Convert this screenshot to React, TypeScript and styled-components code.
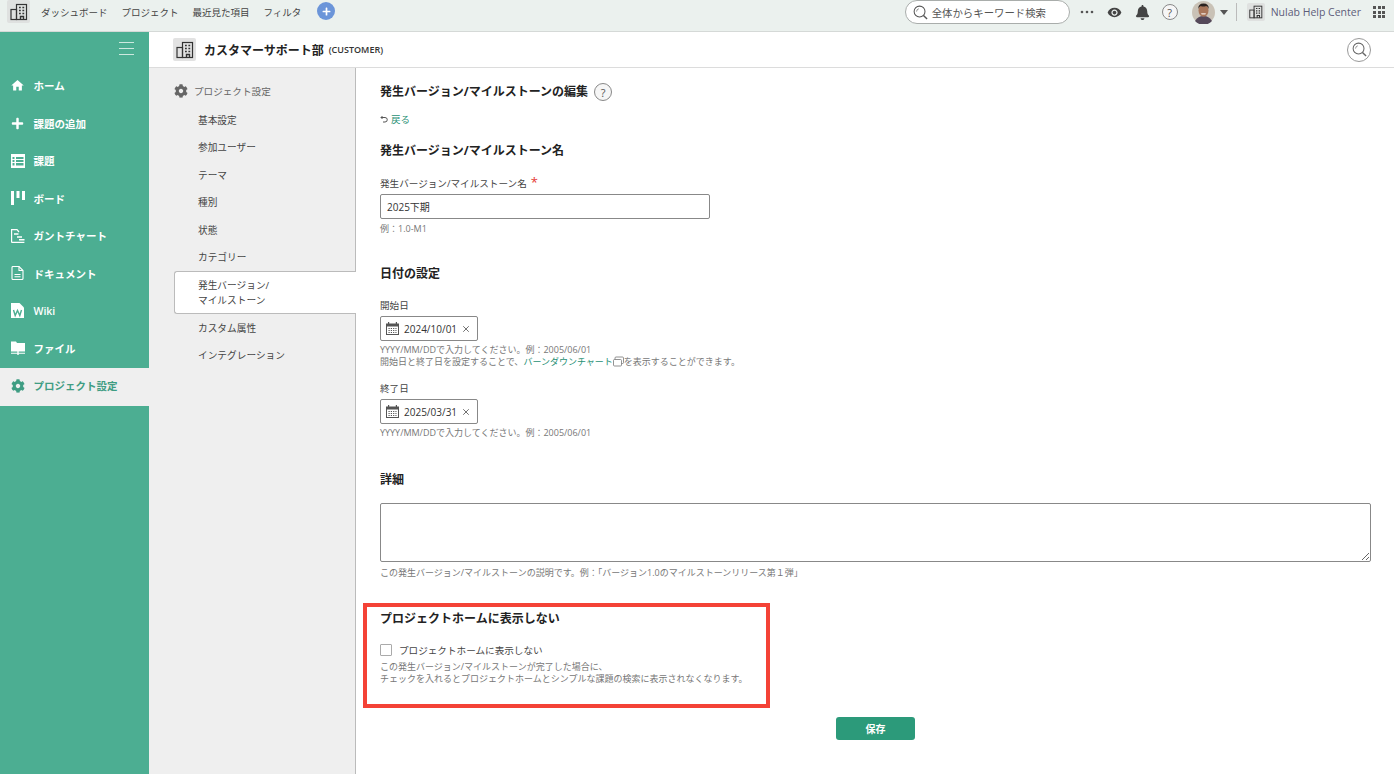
import React from 'react';
import styled, { createGlobalStyle } from 'styled-components';
import { FaPlus, FaCog, FaBell } from 'react-icons/fa';
import { MdHome, MdRemoveRedEye } from 'react-icons/md';
import { FiX } from 'react-icons/fi';

const GlobalStyle = createGlobalStyle`
	html, body {
		margin: 0;
		padding: 0;
		height: 100%;
		background: #fff;
		font-family: 'Open Sans', 'Noto Sans CJK JP', sans-serif;
		color: #333;
	}
	* {
		box-sizing: border-box;
	}
`;

const BuildingIcon = ({ size = 18 }: { size?: number }) => (
	<svg width={size} height={size} viewBox="0 0 18 18" fill="none" stroke="#333" strokeWidth="1.2">
		<rect x="1" y="6.5" width="5.5" height="10" />
		<rect x="6.5" y="1.5" width="10" height="15" />
		<path d="M9 4.5h1.8M12.4 4.5h1.8M9 7.5h1.8M12.4 7.5h1.8M9 10.5h1.8M12.4 10.5h1.8M10.5 16.5v-3h3v3" strokeWidth="1.4" />
	</svg>
);

const LensIcon = ({ size, color }: { size: number; color: string }) => (
	<svg width={size} height={size} viewBox="0 0 16 16" fill="none" stroke={color} strokeWidth="1.100">
		<circle cx="7" cy="7" r="5.800" />
		<path d="M11.200 11.200L15 15" strokeWidth="1.500" />
		<path d="M3.800 7a3.200 3.200 0 012.400-3" strokeWidth=".7" />
	</svg>
);

const DotsIcon = () => (
	<svg width="14" height="4" viewBox="0 0 14 4" fill="#555">
		<circle cx="2" cy="2" r="1.300" />
		<circle cx="7" cy="2" r="1.300" />
		<circle cx="12" cy="2" r="1.300" />
	</svg>
);

const ListIcon = () => (
	<svg width="14" height="14" viewBox="0 0 14 14">
		<path fill="#fff" fillRule="evenodd" d="M0 0h14v14H0zM1.500 3v2h2V3zM5 3v2h7.500V3zM1.500 6v2h2V6zM5 6v2h7.500V6zM1.500 9v2.500h2V9zM5 9v2.500h7.500V9z" />
	</svg>
);

const BoardIcon = () => (
	<svg width="14" height="14" viewBox="0 0 14 14" fill="#fff">
		<rect x="0" y="0" width="3" height="14" />
		<rect x="5.500" y="0" width="3" height="7" />
		<rect x="11" y="0" width="3" height="9" />
	</svg>
);

const GanttIcon = () => (
	<svg width="14" height="14" viewBox="0 0 14 14" fill="none" stroke="#fff" strokeWidth="1.200">
		<path d="M.6 13.400V.6h5.400l2 2.400M.6 13.400H13.400" />
		<path d="M3 5h4.500M6 8h5M8 10.800h5.500" strokeWidth="1.500" />
	</svg>
);

const DocIcon = () => (
	<svg width="13" height="14" viewBox="0 0 13 14" fill="none" stroke="#fff" strokeWidth="1.100">
		<path d="M1 1.500q0-1 1-1h6l4 4v8q0 1-1 1H2q-1 0-1-1z" />
		<path d="M8 .5v4h4M3.500 8.500h6M3.500 10.800h6" />
	</svg>
);

const WikiIcon = () => (
	<svg width="13" height="15" viewBox="0 0 13 15">
		<path fill="#fff" d="M0 0h8.500l4.500 4.500V15H0z" />
		<path fill="none" stroke="#4cae92" strokeWidth="1.400" d="M2.500 7l1.700 5.500 2.300-5 2.300 5L10.500 7" />
	</svg>
);

const FileIcon = () => (
	<svg width="14" height="14" viewBox="0 0 14 14">
		<path fill="#fff" d="M0 .5h5l1 1.500h8v8.500H0zM6.300 10.500h1.400v1.300H14v.9H7.700V14H6.300v-1.300H0v-.9h6.300z" />
	</svg>
);

const CalendarIcon = () => (
	<svg width="13" height="13" viewBox="0 0 13 13">
		<path fill="#555" fillRule="evenodd" d="M0 1.500h2V0h1.200v1.500h6.600V0H11v1.500h2V13H0zM1 4.500V12h11V4.500z" />
		<path stroke="#555" strokeWidth="1.100" strokeDasharray="1.200 1.100" d="M2.500 6.500h8M2.500 8.500h8M2.500 10.500h8" />
	</svg>
);

const BackIcon = () => (
	<svg width="8" height="8" viewBox="0 0 8 8" fill="none" stroke="#555" strokeWidth="1">
		<path d="M1 2.500h4a2 2 0 010 4.500H3M2.500 1L1 2.500 2.500 4" />
	</svg>
);

const ExternalIcon = () => (
	<ExternalSvg width="11" height="11" viewBox="0 0 11 11" fill="none" stroke="#777" strokeWidth=".8">
		<rect x="2" y="1" width="8.500" height="6.500" rx="1" />
		<rect x=".5" y="3.500" width="8" height="6.500" rx="1" fill="#fff" />
	</ExternalSvg>
);

const Avatar = () => (
	<svg width="23" height="23" viewBox="0 0 23 23">
		<circle cx="11.500" cy="11.500" r="11.500" fill="#c9c2b6" />
		<path fill="#55495a" d="M3 20q3-5 8.500-5t8.500 5a11.500 11.500 0 01-17 0z" />
		<ellipse cx="11.500" cy="9.500" rx="5" ry="6.200" fill="#a8765a" />
		<path fill="#2b2320" d="M6.300 8q-.3-5.500 5.200-5.500T16.700 8q-1-3-2.500-3-3 1-5.500 0-1.900 1-2.400 3z" />
		<path fill="#f2e8e0" d="M9 12.200h5l-.7 1.200h-3.600z" />
	</svg>
);

const navItems = ['ダッシュボード', 'プロジェクト', '最近見た項目', 'フィルタ'];

const sideItems = [
	{ label: 'ホーム', icon: <MdHome size={19} color="#fff" /> },
	{ label: '課題の追加', icon: <FaPlus size={13} color="#fff" /> },
	{ label: '課題', icon: <ListIcon /> },
	{ label: 'ボード', icon: <BoardIcon /> },
	{ label: 'ガントチャート', icon: <GanttIcon /> },
	{ label: 'ドキュメント', icon: <DocIcon /> },
	{ label: 'Wiki', icon: <WikiIcon /> },
	{ label: 'ファイル', icon: <FileIcon /> },
];

const subItems = ['基本設定', '参加ユーザー', 'テーマ', '種別', '状態', 'カテゴリー'];

const DateField = ({ value }: { value: string }) => (
	<DateBox>
		<CalendarIcon />
		<DateValue>{value}</DateValue>
		<FiX size={10} color="#555" />
	</DateBox>
);

export default function App() {
	return (
		<Page>
			<GlobalStyle />
			<TopBar>
				<LogoTile>
					<BuildingIcon />
				</LogoTile>
				<TopNav>
					{navItems.map((item) => (
						<TopNavItem key={item}>{item}</TopNavItem>
					))}
				</TopNav>
				<AddCircle>
					<FaPlus size={9} color="#fff" />
				</AddCircle>
				<TopRight>
					<SearchBox>
						<LensIcon size={15} color="#555" />
						<span>全体からキーワード検索</span>
					</SearchBox>
					<DotsSlot>
						<DotsIcon />
					</DotsSlot>
					<EyeSlot>
						<MdRemoveRedEye size={15} color="#444" />
					</EyeSlot>
					<BellSlot>
						<FaBell size={15} color="#444" />
					</BellSlot>
					<HelpCircle $size={16} $left={12}>?</HelpCircle>
					<AvatarSlot>
						<Avatar />
					</AvatarSlot>
					<Caret />
					<Separator />
					<OrgTile>
						<BuildingIcon size={14} />
					</OrgTile>
					<OrgName>Nulab Help Center</OrgName>
					<AppGrid>
						{Array.from({ length: 9 }).map((_, i) => (
							<i key={i} />
						))}
					</AppGrid>
				</TopRight>
			</TopBar>
			<Body>
				<Sidebar>
					<Hamburger>
						<i />
						<i />
						<i />
					</Hamburger>
					{sideItems.map((item) => (
						<SideItem key={item.label}>
							<SideIcon>{item.icon}</SideIcon>
							{item.label}
						</SideItem>
					))}
					<SideItem $active>
						<SideIcon>
							<FaCog size={14} color="#3f9d83" />
						</SideIcon>
						プロジェクト設定
					</SideItem>
				</Sidebar>
				<Content>
					<ProjectHeader>
						<ProjectTile>
							<BuildingIcon />
						</ProjectTile>
						<ProjectName>カスタマーサポート部</ProjectName>
						<ProjectKey>(CUSTOMER)</ProjectKey>
						<HeaderSearch>
							<LensIcon size={15} color="#666" />
						</HeaderSearch>
					</ProjectHeader>
					<Columns>
						<SubNav>
							<SubNavTitle>
								<FaCog size={14} color="#666" />
								プロジェクト設定
							</SubNavTitle>
							{subItems.map((item) => (
								<SubNavItem key={item}>{item}</SubNavItem>
							))}
							<SubNavActive>
								発生バージョン/
								<br />
								マイルストーン
							</SubNavActive>
							<SubNavItem>カスタム属性</SubNavItem>
							<SubNavItem>インテグレーション</SubNavItem>
						</SubNav>
						<Main>
							<TitleRow>
								<Heading>発生バージョン/マイルストーンの編集</Heading>
								<HelpCircle $size={18} $left={6}>?</HelpCircle>
							</TitleRow>
							<BackRow>
								<BackIcon />
								<GreenLink>戻る</GreenLink>
							</BackRow>
							<Heading $top={16}>発生バージョン/マイルストーン名</Heading>
							<Label $top={15}>
								発生バージョン/マイルストーン名<Required>*</Required>
							</Label>
							<TextBox>2025下期</TextBox>
							<Hint>例：1.0-M1</Hint>
							<Heading $top={30}>日付の設定</Heading>
							<Label $top={15}>開始日</Label>
							<DateField value="2024/10/01" />
							<Hint $top={3}>YYYY/MM/DDで入力してください。例：2005/06/01</Hint>
							<Hint $flush>
								開始日と終了日を設定することで、<GreenLink>バーンダウンチャート</GreenLink>
								<ExternalIcon />
								を表示することができます。
							</Hint>
							<Label $top={12}>終了日</Label>
							<DateField value="2025/03/31" />
							<Hint $top={3}>YYYY/MM/DDで入力してください。例：2005/06/01</Hint>
							<Heading $top={32}>詳細</Heading>
							<DetailArea readOnly />
							<Hint $top={5}>この発生バージョン/マイルストーンの説明です。例：「バージョン1.0のマイルストーンリリース第１弾」</Hint>
							<Highlighted>
								<HighlightFrame />
								<Heading>プロジェクトホームに表示しない</Heading>
								<CheckRow>
									<CheckBox />
									<Label>プロジェクトホームに表示しない</Label>
								</CheckRow>
								<Hint $top={4}>この発生バージョン/マイルストーンが完了した場合に、</Hint>
								<Hint $flush>チェックを入れるとプロジェクトホームとシンプルな課題の検索に表示されなくなります。</Hint>
							</Highlighted>
							<SaveRow>
								<SaveButton>保存</SaveButton>
							</SaveRow>
						</Main>
					</Columns>
				</Content>
			</Body>
		</Page>
	);
}

const Page = styled.div`
	width: 1394px;
	height: 774px;
	display: flex;
	flex-direction: column;
	overflow: hidden;
`;

const TopBar = styled.header`
	height: 32px;
	flex: none;
	display: flex;
	align-items: flex-start;
	padding-left: 7px;
	background: #ebf1ee;
	border-bottom: 1px solid #d5d9d7;
`;

const LogoTile = styled.div`
	width: 23px;
	height: 23px;
	display: flex;
	align-items: center;
	justify-content: center;
	background: #dfe1e0;
	border-radius: 2px;
`;

const TopNav = styled.nav`
	display: flex;
	gap: 14px;
	margin-left: 11px;
	height: 23px;
	align-items: center;
`;

const TopNavItem = styled.span`
	font-size: 9.500px;
	color: #444;
`;

const AddCircle = styled.div`
	width: 18px;
	height: 18px;
	margin: 2px 0 0 16px;
	display: flex;
	align-items: center;
	justify-content: center;
	border-radius: 50%;
	background: #6b95d9;
`;

const TopRight = styled.div`
	margin-left: auto;
	height: 24px;
	display: flex;
	align-items: center;
`;

const SearchBox = styled.div`
	width: 165px;
	height: 24px;
	display: flex;
	align-items: center;
	gap: 4px;
	padding-left: 7px;
	background: #fff;
	border: 1px solid #a9adab;
	border-radius: 12px;
	font-size: 10.400px;
	color: #555;
`;

const DotsSlot = styled.span`
	display: flex;
	margin-left: 10px;
`;

const EyeSlot = styled.span`
	display: flex;
	margin-left: 13px;
`;

const BellSlot = styled.span`
	display: flex;
	margin-left: 13px;
`;

const HelpCircle = styled.span<{ $size: number; $left: number }>`
	width: ${({ $size }) => $size}px;
	height: ${({ $size }) => $size}px;
	margin-left: ${({ $left }) => $left}px;
	display: inline-flex;
	align-items: center;
	justify-content: center;
	flex: none;
	border: 1px solid #888;
	border-radius: 50%;
	background: #f6f6f6;
	font-size: 11px;
	color: #555;
`;

const AvatarSlot = styled.span`
	display: flex;
	margin-left: 14px;
`;

const Caret = styled.span`
	width: 0;
	height: 0;
	margin-left: 5px;
	border-left: 4px solid transparent;
	border-right: 4px solid transparent;
	border-top: 5px solid #555;
`;

const Separator = styled.span`
	width: 1px;
	height: 18px;
	margin-left: 8px;
	background: #bbb;
`;

const OrgTile = styled.span`
	width: 18px;
	height: 18px;
	margin-left: 10px;
	display: flex;
	align-items: center;
	justify-content: center;
	background: #dfe1e0;
	border-radius: 2px;
`;

const OrgName = styled.span`
	margin-left: 6px;
	font-size: 10.500px;
	color: #5d5d7a;
`;

const AppGrid = styled.span`
	width: 12px;
	height: 12px;
	margin: 0 9px 0 12px;
	display: grid;
	grid-template-columns: repeat(3, 3px);
	grid-auto-rows: 3px;
	gap: 1.500px;

	i {
		background: #555;
	}
`;

const Body = styled.div`
	flex: 1;
	display: flex;
	min-height: 0;
`;

const Sidebar = styled.aside`
	width: 149px;
	flex: none;
	background: #4cae92;
`;

const Hamburger = styled.div`
	height: 36px;
	display: flex;
	flex-direction: column;
	align-items: flex-end;
	justify-content: center;
	gap: 5px;
	padding-right: 15px;
	padding-bottom: 3px;

	i {
		width: 15px;
		height: 1px;
		background: #cde9df;
	}
`;

const SideItem = styled.div<{ $active?: boolean }>`
	height: 37.500px;
	display: flex;
	align-items: center;
	padding: 0 0 2px 10px;
	font-size: 10.500px;
	font-weight: 600;
	color: ${({ $active }) => ($active ? '#3f9d83' : '#fff')};
	background: ${({ $active }) => ($active ? '#efefef' : 'transparent')};
`;

const SideIcon = styled.span`
	width: 15px;
	margin-right: 8.500px;
	display: flex;
	justify-content: center;
`;

const Content = styled.div`
	flex: 1;
	display: flex;
	flex-direction: column;
	min-width: 0;
`;

const ProjectHeader = styled.div`
	height: 36px;
	flex: none;
	display: flex;
	align-items: center;
	padding: 0 23px 0 24px;
	background: #fff;
	border-bottom: 1px solid #dcdcdc;
`;

const ProjectTile = styled.div`
	width: 23px;
	height: 23px;
	display: flex;
	align-items: center;
	justify-content: center;
	background: #e2e2e2;
	border-radius: 2px;
`;

const ProjectName = styled.span`
	margin-left: 8px;
	font-size: 12px;
	font-weight: 600;
	color: #222;
`;

const ProjectKey = styled.span`
	margin-left: 5px;
	font-size: 9px;
	font-weight: 600;
	color: #333;
`;

const HeaderSearch = styled.span`
	width: 24px;
	height: 24px;
	margin-left: auto;
	display: flex;
	align-items: center;
	justify-content: center;
	border: 1px solid #999;
	border-radius: 50%;
`;

const Columns = styled.div`
	flex: 1;
	display: flex;
	min-height: 0;
`;

const SubNav = styled.nav`
	width: 207px;
	flex: none;
	padding: 9px 0 0 25px;
	background: #efefef;
	border-right: 1px solid #bbb;
`;

const SubNavTitle = styled.div`
	height: 29px;
	display: flex;
	align-items: center;
	gap: 6px;
	padding-bottom: 2px;
	font-size: 9.600px;
	color: #666;
`;

const SubNavItem = styled.div`
	height: 27.500px;
	display: flex;
	align-items: center;
	padding-left: 24px;
	font-size: 9.700px;
	color: #444;
`;

const SubNavActive = styled.div`
	height: 43px;
	margin-right: -1px;
	padding: 6px 0 0 23px;
	background: #fff;
	border: 1px solid #bbb;
	border-right: 0;
	border-radius: 3px 0 0 3px;
	font-size: 9.700px;
	line-height: 15px;
	color: #444;
`;

const Main = styled.main`
	flex: 1;
	min-width: 0;
	padding: 15px 23px 0 24px;
	background: #fff;
`;

const TitleRow = styled.div`
	display: flex;
	align-items: center;
	height: 18px;
`;

const Heading = styled.h2<{ $top?: number }>`
	margin: ${({ $top }) => $top ?? 0}px 0 0;
	font-size: 12px;
	line-height: 18px;
	font-weight: 700;
	color: #222;
`;

const BackRow = styled.div`
	display: flex;
	align-items: center;
	gap: 3px;
	height: 14px;
	margin-top: 11px;
	font-size: 9.500px;
`;

const GreenLink = styled.span`
	color: #1f9075;
`;

const Label = styled.div<{ $top?: number }>`
	margin-top: ${({ $top }) => $top ?? 0}px;
	height: 15px;
	font-size: 9.600px;
	line-height: 15px;
	color: #444;
`;

const Required = styled.span`
	margin-left: 4px;
	font-size: 13px;
	color: #e53935;
`;

const TextBox = styled.div`
	width: 330px;
	height: 25px;
	margin-top: 4px;
	display: flex;
	align-items: center;
	padding-left: 6px;
	border: 1px solid #888;
	border-radius: 2px;
	font-size: 10px;
	color: #333;
`;

const Hint = styled.p<{ $flush?: boolean; $top?: number }>`
	margin: ${({ $flush, $top }) => ($flush ? 0 : ($top ?? 4))}px 0 0;
	height: ${({ $flush }) => ($flush ? 13 : 12)}px;
	font-size: 9px;
	line-height: 12px;
	color: #777;
`;

const ExternalSvg = styled.svg`
	vertical-align: -2px;
`;

const DateBox = styled.div`
	width: 98px;
	height: 25px;
	margin-top: 3px;
	display: flex;
	align-items: center;
	padding: 0 6px 0 5px;
	border: 1px solid #888;
	border-radius: 2px;
`;

const DateValue = styled.span`
	flex: 1;
	margin-left: 5px;
	font-size: 10px;
	color: #333;
`;

const DetailArea = styled.textarea`
	display: block;
	width: 991px;
	height: 59px;
	margin: 14px 0 0;
	padding: 0;
	outline: 0;
	resize: vertical;
	border: 1px solid #888;
	border-radius: 2px;
`;

const Highlighted = styled.section`
	position: relative;
	margin-top: 31px;
`;

const HighlightFrame = styled.div`
	position: absolute;
	left: -17px;
	top: -7px;
	width: 407px;
	height: 105px;
	border: 4px solid #f44236;
	pointer-events: none;
`;

const CheckRow = styled.div`
	display: flex;
	align-items: center;
	gap: 7px;
	height: 14px;
	margin-top: 15px;
`;

const CheckBox = styled.span`
	width: 12px;
	height: 12px;
	background: #fff;
	border: 1px solid #aaa;
	border-radius: 1px;
`;

const SaveRow = styled.div`
	display: flex;
	margin-top: 31px;
	padding-left: 456px;
`;

const SaveButton = styled.button`
	width: 79px;
	height: 23px;
	padding: 0;
	background: #2c9a7a;
	border: 0;
	border-radius: 3px;
	font-family: inherit;
	font-size: 10px;
	font-weight: 700;
	color: #fff;
`;
